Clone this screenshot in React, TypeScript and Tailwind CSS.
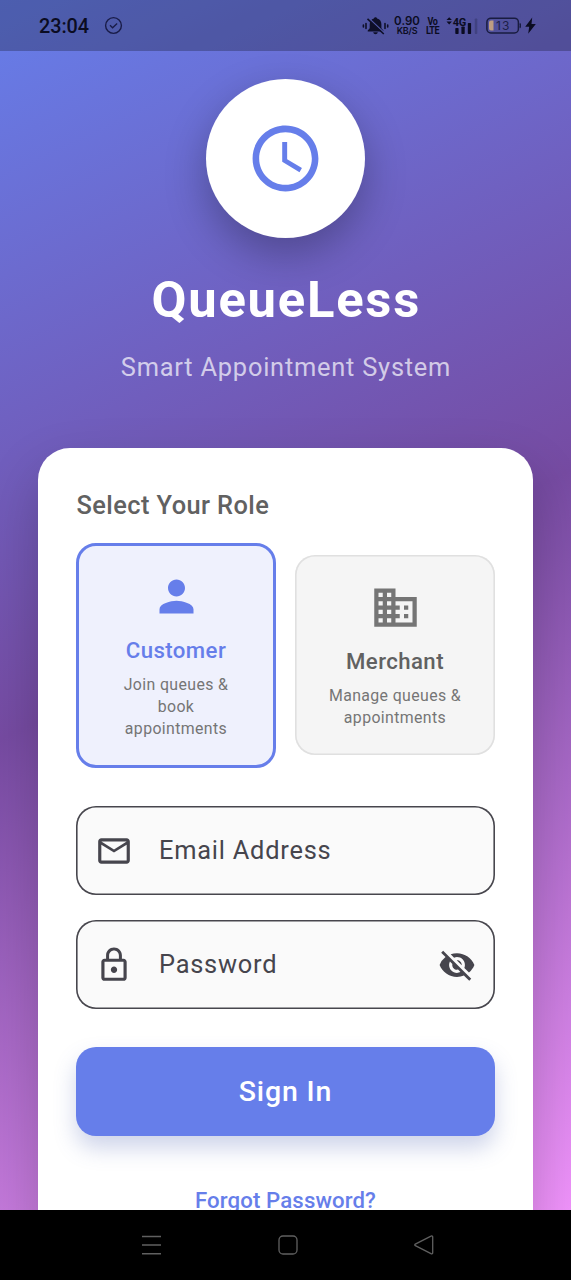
import React from "react";
import {
  MdAccessTime,
  MdBusiness,
  MdLockOutline,
  MdMailOutline,
  MdPerson,
  MdVisibilityOff,
} from "react-icons/md";

function MutedBell() {
  return (
    <svg width="27" height="20" viewBox="0 0 27 20" fill="none">
      <path d="M13.500 1.200c.9 0 1.500.6 1.600 1.400 2.800.7 4.300 2.800 4.300 5.600v4l2 2.400v1H5.700v-1l2-2.400v-4c0-2.800 1.600-4.900 4.200-5.600.1-.8.7-1.400 1.600-1.400Z" fill="#0e0f28" />
      <path d="M11.200 16.200h4.600c-.2 1.200-1.200 2-2.300 2s-2.100-.8-2.300-2Z" fill="#0e0f28" />
      <path d="M6.500 2 23 17.500" stroke="#4f57a5" strokeWidth="1.500" />
      <path d="M5.500 2.800 21.800 18" stroke="#0e0f28" strokeWidth="1.600" />
      <path d="M1.400 9v2M4 7.500v5M23 7.500v5M25.700 9v2" stroke="#0e0f28" strokeWidth="1.600" strokeLinecap="round" />
    </svg>
  );
}

function StatusBar() {
  return (
    <header className="flex h-[51px] shrink-0 items-center bg-black/25 pl-[39px] pr-[35px] text-[#0b0c22]">
      <span className="w-[65px] pt-[2px] font-['Roboto'] text-[19.800px] font-medium leading-none tracking-[-0.050px]">23:04</span>
      <svg width="19" height="19" viewBox="0 0 19 19" fill="none" stroke="#191c48" strokeWidth="1.400">
        <circle cx="9.500" cy="9.500" r="7.900" />
        <path d="m6 9.300 2.600 2.400 4.500-4.100" />
      </svg>
      <div className="ml-auto flex items-center">
        <MutedBell />
        <div className="ml-[5px] flex w-[26px] flex-col items-center whitespace-nowrap pt-px font-['Inter'] font-semibold">
          <span className="text-[11.500px] leading-[10px]">0.90</span>
          <span className="text-[9px] leading-[10px] tracking-[-0.200px]">KB/S</span>
        </div>
        <div className="ml-[6px] flex w-[13px] scale-y-[1.150] flex-col items-center font-['Roboto'] text-[9px] font-bold leading-[8px] tracking-[-0.500px]">
          <span>Vo</span>
          <span>LTE</span>
        </div>
        <svg className="ml-[7px]" width="33" height="20" viewBox="0 0 33 20" fill="#0b0c22">
          <path d="M.5 4 3.200 1.200 5.900 4ZM.5 5.600h5.400L3.200 8.400Z" />
          <text x="6.700" y="9.500" fontFamily="Roboto" fontSize="11" fontWeight="700" letterSpacing="-0.300">4G</text>
          <rect x="9.300" y="12" width="3.300" height="6" rx=".7" />
          <rect x="15.400" y="10.500" width="3.300" height="7.500" rx=".7" />
          <rect x="21.800" y="7" width="3.300" height="11" rx=".7" />
          <rect x="28.800" y="2.500" width="2.500" height="15.500" rx=".7" opacity=".22" />
        </svg>
        <svg className="ml-[7px]" width="35" height="17" viewBox="0 0 35 17" fill="none">
          <rect x=".9" y="1.200" width="31.500" height="14.800" rx="4" stroke="#191c40" strokeWidth="1.500" />
          <path d="M7.500 3.600v10H5A2 2 0 0 1 3 11.600v-6a2 2 0 0 1 2-2Z" fill="#bd9d82" />
          <path d="M33.700 6.500c1 .8 1 3.400 0 4.200" stroke="#191c40" strokeWidth="1.500" />
          <text x="10" y="13" fontFamily="Inter" fontSize="12" letterSpacing="1" fill="#1d2048">13</text>
        </svg>
        <svg className="ml-[4px]" width="11" height="17" viewBox="0 0 11 17" fill="#0b0c22">
          <path d="M7.200.5.200 9.800h4L3.200 16.800 10.800 7H6.500Z" />
        </svg>
      </div>
    </header>
  );
}

function RoleCard({ selected = false, icon, title, children }: {
  selected?: boolean;
  icon: React.ReactNode;
  title: string;
  children: React.ReactNode;
}) {
  return (
    <button
      className={
        selected
          ? "flex h-[225px] w-[200px] flex-col items-center rounded-[20px] border-[3px] border-[#667eea] bg-[#eff1fd] pt-[25px] text-[#667eea]"
          : "flex h-[200px] w-[200px] flex-col items-center rounded-[20px] bg-[#f5f5f5] pt-[27px] text-[#757575] shadow-[inset_0_0_0_1.600px_#e0e0e0]"
      }
    >
      {icon}
      <span className={selected ? "mt-[12px] text-[22.200px] font-medium leading-[32px] tracking-[0.420px]" : "mt-[12px] text-[22.200px] font-medium leading-[32px] tracking-[0.420px] text-[#616161]"}>
        {title}
      </span>
      <span className="mt-[8px] text-[15.860px] leading-[22.400px] tracking-[0.380px] text-[#757575]">{children}</span>
    </button>
  );
}

function Field({ icon, label, action }: { icon: React.ReactNode; label: string; action?: React.ReactNode }) {
  return (
    <div className="flex h-[89px] items-center rounded-[20px] bg-[#fafafa] pl-[19px] pr-[19px] pt-px text-[#46454d] shadow-[inset_0_0_0_1.600px_#47464d]">
      {icon}
      <span className="ml-[26px] flex-1 pb-[2px] text-[25.400px] leading-[38px] tracking-[0.770px]">{label}</span>
      {action}
    </div>
  );
}

function NavigationBar() {
  return (
    <nav className="flex h-[70px] shrink-0 items-center bg-black pl-[140px] pr-[136px]">
      <div className="flex w-full justify-between">
        <svg width="22" height="22" viewBox="0 0 22 22" stroke="#606060" strokeWidth="1.500"><path d="M2 2.500h19M2 11h19M2 19.700h19" /></svg>
        <svg width="22" height="22" viewBox="0 0 22 22" fill="none" stroke="#606060" strokeWidth="1.300"><rect x="2" y="2" width="18" height="18" rx="4" /></svg>
        <svg width="22" height="22" viewBox="0 0 22 22" fill="none" stroke="#606060" strokeWidth="1.300" strokeLinejoin="round"><path d="M2.300 10.100 18 2.100c.9-.5 1.700 0 1.700.9v15.800c0 .9-.8 1.400-1.700.9L2.300 11.700c-.7-.4-.7-1.200 0-1.600Z" /></svg>
      </div>
    </nav>
  );
}

export default function App() {
  return (
    <div className="flex h-[1280px] w-[571px] flex-col overflow-hidden bg-black font-['Roboto',sans-serif]">
      <div className="flex h-[1210px] shrink-0 flex-col overflow-hidden bg-[linear-gradient(154.740deg,#667eea_0%,#764ba2_50%,#f093fb_100%)]">
        <StatusBar />
        <main className="flex flex-col items-center px-[38px] pt-[27.500px]">
          <div className="flex size-[159px] shrink-0 items-center justify-center rounded-full bg-white shadow-[0_16px_42px_rgba(0,0,0,0.28)]">
            <MdAccessTime className="size-[79px] text-[#667eea]" />
          </div>
          <h1 className="mt-[32px] pl-[1.500px] text-[50.750px] font-bold leading-[60px] tracking-[1.750px] text-white">QueueLess</h1>
          <p className="mt-[19px] pl-px text-[25.400px] leading-[36px] tracking-[0.780px] text-white/70">Smart Appointment System</p>
          <section className="mt-[63.500px] flex h-[900px] w-[495px] shrink-0 flex-col rounded-t-[32px] bg-white px-[38px] pt-[38px] shadow-[0_24px_55px_rgba(0,0,0,0.2)]">
            <h2 className="pl-[0.500px] text-[25.400px] font-medium leading-[38px] tracking-[0.420px] text-[#616161]">Select Your Role</h2>
            <div className="mt-[18.500px] flex items-center justify-between">
              <RoleCard selected icon={<MdPerson className="size-[51px] shrink-0" />} title="Customer">
                Join queues &amp;<br />book<br />appointments
              </RoleCard>
              <RoleCard icon={<MdBusiness className="size-[51px] shrink-0" />} title="Merchant">
                Manage queues &amp;<br />appointments
              </RoleCard>
            </div>
            <div className="mt-[38px] flex flex-col gap-[25px]">
              <Field icon={<MdMailOutline className="size-[38px]" />} label="Email Address" />
              <Field icon={<MdLockOutline className="size-[38px]" />} label="Password" action={<MdVisibilityOff className="size-[38px]" />} />
            </div>
            <button className="mt-[38px] h-[89px] shrink-0 rounded-[20px] bg-[#667eea] pt-[2px] text-[28.500px] font-medium tracking-[0.850px] text-white shadow-[0_12px_22px_rgba(80,100,180,0.28)]">
              Sign In
            </button>
            <a className="mt-[48px] text-center text-[22.200px] font-medium leading-[32px] tracking-[0.120px] text-[#667eea]">Forgot Password?</a>
          </section>
        </main>
      </div>
      <NavigationBar />
    </div>
  );
}
